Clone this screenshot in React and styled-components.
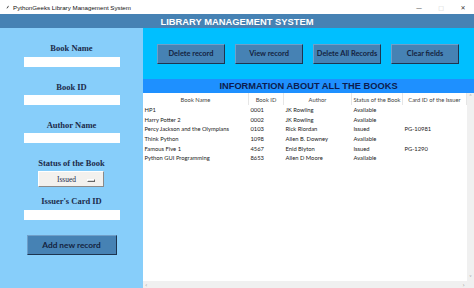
import styled, { createGlobalStyle } from 'styled-components'

const Global = createGlobalStyle`
*{box-sizing:border-box;}
html,body{margin:0;padding:0;background:#fff;}
`

const books = [
  ['HP1', '0001', 'JK Rowling', 'Available', ''],
  ['Harry Potter 2', '0002', 'JK Rowling', 'Available', ''],
  ['Percy Jackson and the Olympians', '0103', 'Rick Riordan', 'Issued', 'PG-10981'],
  ['Think Python', '1098', 'Allen B. Downey', 'Available', ''],
  ['Famous Five 1', '4567', 'Enid Blyton', 'Issued', 'PG-1290'],
  ['Python GUI Programming', '8653', 'Allen D Moore', 'Available', ''],
]
const columns = ['Book Name', 'Book ID', 'Author', 'Status of the Book', 'Card ID of the Issuer']
const colTemplate = '106px 35px 68px 51px 64px'

export default function App(){
  return (
    <Window>
      <Global/>
      <TitleBar>
        <Feather viewBox="0 0 10 10">
          <path d="M2 9 L3 7 Q4 3 8 1 Q7 5 4 7 L3 7" fill="#333"/>
        </Feather>
        <TitleText>PythonGeeks Library Management System</TitleText>
        <Controls>
          <Ctrl>&#8212;</Ctrl>
          <Ctrl $dim>&#9633;</Ctrl>
          <Ctrl>&#10005;</Ctrl>
        </Controls>
      </TitleBar>
      <Header>LIBRARY MANAGEMENT SYSTEM</Header>
      <Body>
        <Left>
          <Field $top={14}>
            <Label>Book Name</Label>
            <Entry/>
          </Field>
          <Field $top={14}>
            <Label>Book ID</Label>
            <Entry/>
          </Field>
          <Field $top={13.5}>
            <Label>Author Name</Label>
            <Entry/>
          </Field>
          <Field $top={13.5}>
            <Label>Status of the Book</Label>
            <Dropdown>
              <span>Issued</span>
              <Indicator/>
            </Dropdown>
          </Field>
          <Field $top={8}>
            <Label>Issuer's Card ID</Label>
            <Entry/>
          </Field>
          <AddButton>Add new record</AddButton>
        </Left>
        <Right>
          <ButtonRow>
            <ActionButton>Delete record</ActionButton>
            <ActionButton>View record</ActionButton>
            <ActionButton>Delete All Records</ActionButton>
            <ActionButton>Clear fields</ActionButton>
          </ButtonRow>
          <InfoBar>INFORMATION ABOUT ALL THE BOOKS</InfoBar>
          <TableArea>
            <Table>
              <HeadRow>
                {columns.map(c=><HeadCell key={c}>{c}</HeadCell>)}
              </HeadRow>
              {books.map(b=>(
                <Row key={b[0]}>
                  {b.map((v,i)=><Cell key={i}>{v}</Cell>)}
                </Row>
              ))}
            </Table>
            <VScroll>
              <Arrow>&#708;</Arrow>
              <Arrow>&#709;</Arrow>
            </VScroll>
            <HScroll>
              <Arrow>&#8249;</Arrow>
              <Arrow>&#8250;</Arrow>
            </HScroll>
            <Corner/>
          </TableArea>
        </Right>
      </Body>
    </Window>
  )
}

const Window=styled.div`
width:474px;
height:288px;
display:flex;
flex-direction:column;
overflow:hidden;
`
const TitleBar=styled.div`
height:14px;
background:#fff;
display:flex;
align-items:center;
padding-left:5px;
`
const Feather=styled.svg`
width:5px;
height:7px;
`
const TitleText=styled.span`
font-family:"Liberation Sans",Arial,sans-serif;
font-size:6.2px;
color:#111;
margin-left:3px;
white-space:nowrap;
`
const Controls=styled.div`
margin-left:auto;
display:flex;
`
const Ctrl=styled.span`
width:22px;
text-align:center;
font-family:"DejaVu Sans",sans-serif;
font-size:6px;
color:${p=>p.$dim?'#ccc':'#333'};
`
const Header=styled.div`
height:14px;
background:#4682b4;
color:#fff;
font-family:"Liberation Sans",Arial,sans-serif;
font-weight:bold;
font-size:9.4px;
display:flex;
align-items:center;
justify-content:center;
`
const Body=styled.div`
flex:1;
display:flex;
min-height:0;
`
const Left=styled.div`
width:143px;
background:#87cefa;
display:flex;
flex-direction:column;
align-items:center;
`
const Field=styled.div`
display:flex;
flex-direction:column;
align-items:center;
gap:2.5px;
margin-top:${p=>p.$top}px;
`
const Label=styled.div`
height:12px;
line-height:12px;
font-family:"Liberation Serif",serif;
font-weight:bold;
font-size:8.5px;
color:#1c2b4a;
`
const Entry=styled.div`
width:96px;
height:10px;
background:#fff;
`
const Dropdown=styled.div`
width:66px;
height:16px;
background:#f3f1ee;
border:1px solid;
border-color:#fff #8a8a8a #8a8a8a #fff;
display:flex;
align-items:center;
justify-content:center;
padding-right:10px;
position:relative;
font-family:"Liberation Serif",serif;
font-size:7.5px;
color:#1c2b4a;
`
const Indicator=styled.div`
position:absolute;
right:8px;
top:7px;
width:8px;
height:3px;
border:1px solid;
border-color:#fff #666 #666 #fff;
background:#ddd;
`
const AddButton=styled.div`
margin-top:15px;
width:90px;
height:20px;
background:#4682b4;
border:1px solid;
border-color:#6f9fc9 #1d3550 #1d3550 #6f9fc9;
display:flex;
align-items:center;
justify-content:center;
font-family:Lato,sans-serif;
font-weight:bold;
font-size:8.3px;
color:#14233f;
`
const Right=styled.div`
flex:1;
background:#00bfff;
display:flex;
flex-direction:column;
min-width:0;
`
const ButtonRow=styled.div`
height:51px;
display:flex;
align-items:center;
gap:10px;
padding-left:14px;
`
const ActionButton=styled.div`
width:68px;
height:20px;
background:#4682b4;
border:1px solid;
border-color:#6f9fc9 #1d3550 #1d3550 #6f9fc9;
display:flex;
align-items:center;
justify-content:center;
font-family:Lato,sans-serif;
font-weight:bold;
font-size:7.4px;
color:#14233f;
white-space:nowrap;
`
const InfoBar=styled.div`
height:14px;
background:#1e90ff;
color:#0c1c4e;
font-family:"Liberation Sans",Arial,sans-serif;
font-weight:bold;
font-size:9.3px;
display:flex;
align-items:center;
justify-content:center;
`
const TableArea=styled.div`
flex:1;
background:#fff;
display:grid;
grid-template-columns:1fr 7px;
grid-template-rows:1fr 7px;
min-height:0;
`
const Table=styled.div`
overflow:hidden;
font-family:Lato,sans-serif;
font-size:5.8px;
`
const HeadRow=styled.div`
display:grid;
grid-template-columns:${colTemplate};
height:12px;
`
const HeadCell=styled.div`
display:flex;
align-items:center;
justify-content:center;
color:#444;
border-right:1px solid #e6e6e6;
white-space:nowrap;
`
const Row=styled.div`
display:grid;
grid-template-columns:${colTemplate};
height:9.6px;
align-items:center;
`
const Cell=styled.div`
padding-left:1.5px;
color:#222;
white-space:nowrap;
`
const VScroll=styled.div`
background:#f0f0f0;
display:flex;
flex-direction:column;
justify-content:space-between;
align-items:center;
`
const HScroll=styled.div`
background:#f0f0f0;
display:flex;
justify-content:space-between;
align-items:center;
padding:0 2px;
`
const Arrow=styled.span`
font-family:"DejaVu Sans",sans-serif;
font-size:6px;
line-height:7px;
color:#999;
`
const Corner=styled.div`
background:#f0f0f0;
`
